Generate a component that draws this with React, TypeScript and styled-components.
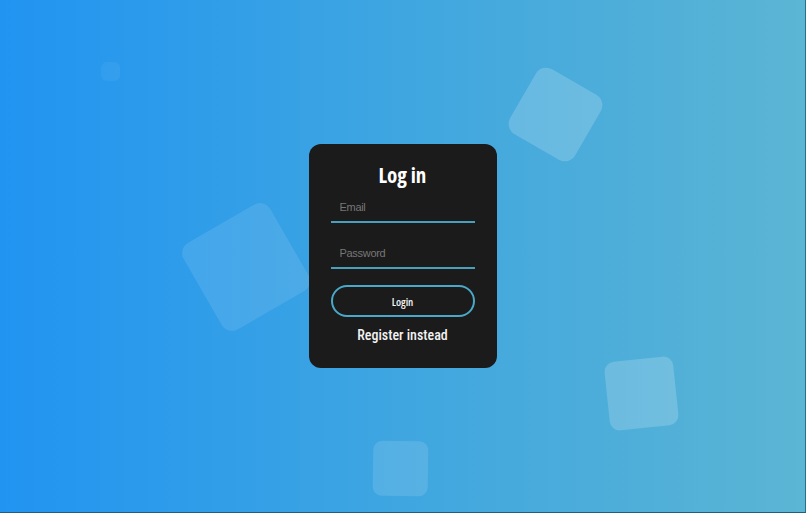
import React from "react";
import { styled, createGlobalStyle } from "styled-components";

const GlobalStyle = createGlobalStyle`
  html, body {
    margin: 0;
    padding: 0;
    height: 100%;
  }

  #root {
    height: 100%;
  }

  * {
    box-sizing: border-box;
  }
`;

type Square = {
  x: number;
  y: number;
  size: number;
  rotate: number;
  opacity: number;
  radius: number;
};

const squares: Square[] = [
  { x: 110, y: 71, size: 19, rotate: 0, opacity: 0.05, radius: 6 },
  { x: 555, y: 114, size: 75, rotate: 30, opacity: 0.18, radius: 12 },
  { x: 246, y: 267, size: 100, rotate: -30, opacity: 0.1, radius: 12 },
  { x: 641, y: 393, size: 69, rotate: -6, opacity: 0.18, radius: 10 },
  { x: 400, y: 468, size: 55, rotate: 1, opacity: 0.12, radius: 9 },
];

const App = () => {
  return (
    <>
      <GlobalStyle />
      <StyledPage>
        {squares.map((s, i) => (
          <StyledSquare
            key={i}
            style={{
              left: s.x - s.size / 2,
              top: s.y - s.size / 2,
              width: s.size,
              height: s.size,
              transform: `rotate(${s.rotate}deg)`,
              opacity: s.opacity,
              borderRadius: s.radius,
            }}
          />
        ))}

        <StyledCard>
          <StyledTitle>Log in</StyledTitle>
          <StyledInput type="email" placeholder="Email" />
          <StyledInput type="password" placeholder="Password" $gap={14} />
          <StyledButton type="button">Login</StyledButton>
          <StyledLink href="#">Register instead</StyledLink>
        </StyledCard>
      </StyledPage>
    </>
  );
};

export default App;

const StyledPage = styled("div")`
  position: relative;
  overflow: hidden;

  display: flex;
  align-items: center;
  justify-content: center;

  width: 100%;
  height: 100%;

  background: linear-gradient(90deg, #2194f2 0%, #3fa6e0 50%, #5bb5d4 100%);
  border-right: 1px solid #2c6f8a;
  border-bottom: 1px solid #1f5f7e;
`;

const StyledSquare = styled("div")`
  position: absolute;
  background-color: #ffffff;
`;

const StyledCard = styled("div")`
  position: relative;
  z-index: 1;

  display: flex;
  flex-direction: column;
  align-items: center;

  width: 188px;
  height: 224px;
  padding: 18px 22px 0;

  background-color: #1b1b1b;
  border-radius: 12px;
`;

const StyledTitle = styled("h1")`
  margin: 0 0 3px;

  font-family: "Open Sans", sans-serif;
  font-stretch: 75%;
  font-size: 21px;
  line-height: 26px;
  font-weight: 700;
  color: #ffffff;
`;

const StyledInput = styled("input")<{ $gap?: number }>`
  width: 100%;
  height: 32px;
  margin-top: ${(p) => p.$gap ?? 0}px;
  padding: 2px 9px 0;

  background: transparent;
  border: none;
  border-bottom: 2px solid #4a9fbc;
  outline: none;

  font-family: "Liberation Sans", Arial, sans-serif;
  font-size: 11px;
  letter-spacing: -0.3px;
  color: #dddddd;

  &::placeholder {
    color: #777777;
  }
`;

const StyledButton = styled("button")`
  width: 100%;
  height: 32px;
  margin-top: 16px;

  background: transparent;
  border: 2px solid #4aa8c8;
  border-radius: 16px;

  font-family: "Open Sans", sans-serif;
  font-stretch: 75%;
  font-size: 11px;
  font-weight: 600;
  color: #f4f4f4;
  cursor: pointer;
`;

const StyledLink = styled("a")`
  margin-top: 9px;

  font-family: "Roboto", sans-serif;
  font-stretch: 75%;
  font-size: 14px;
  line-height: 18px;
  font-weight: 500;
  color: #f2f2f2;
  text-decoration: none;
`;
